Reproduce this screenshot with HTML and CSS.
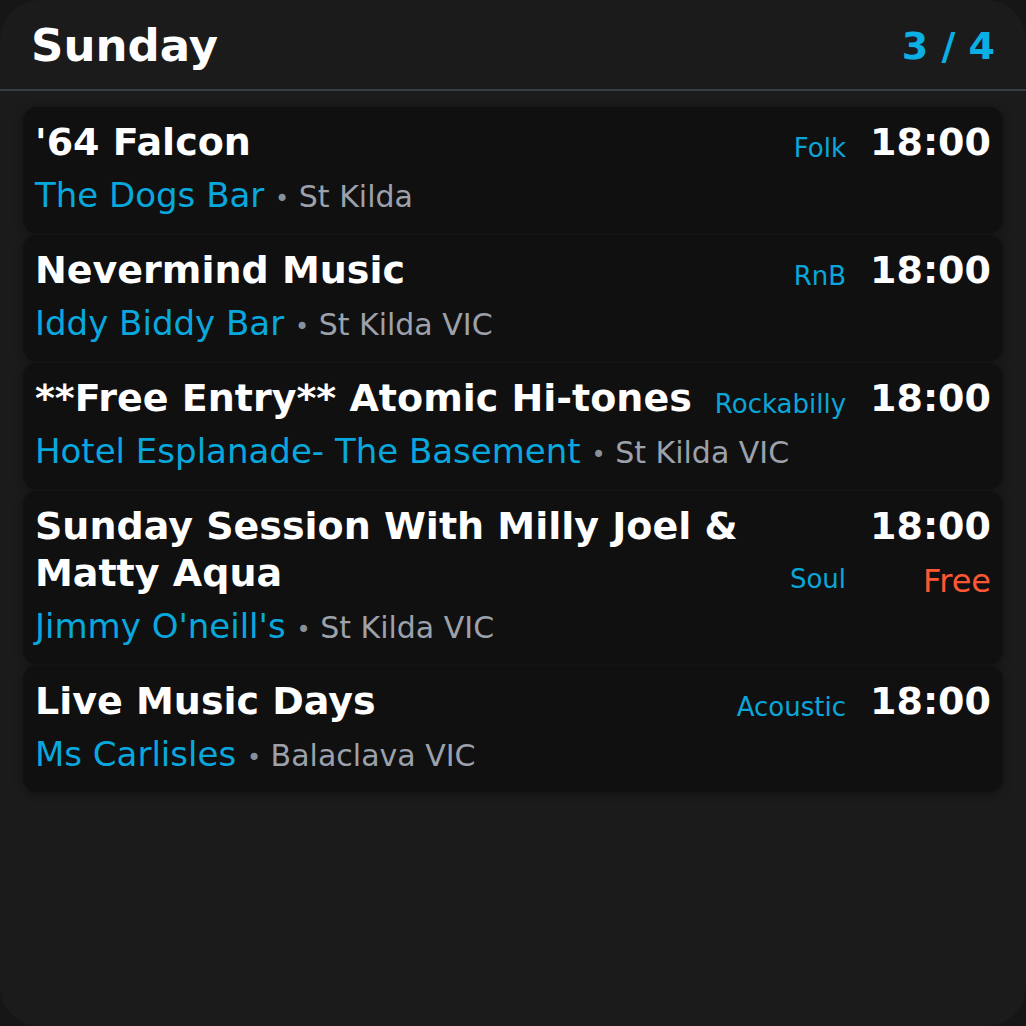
FILE: index.html
```html
<!DOCTYPE html>
<html lang="en">
<head>
<meta charset="utf-8">
<title>Sunday</title>
<link rel="stylesheet" href="styles.css">
</head>
<body>
<div class="app">
  <header class="header">
    <h1 class="day">Sunday</h1>
    <div class="count">3 / 4</div>
  </header>
  <main class="list">
    <article class="card">
      <div class="card-top">
        <h2 class="title">'64 Falcon</h2>
        <div class="meta">
          <span class="genre">Folk</span>
          <div class="when"><span class="time">18:00</span></div>
        </div>
      </div>
      <div class="venue"><span class="place">The Dogs Bar</span> <span class="sep">•</span><span class="loc"> St Kilda</span></div>
    </article>
    <article class="card">
      <div class="card-top">
        <h2 class="title">Nevermind Music</h2>
        <div class="meta">
          <span class="genre">RnB</span>
          <div class="when"><span class="time">18:00</span></div>
        </div>
      </div>
      <div class="venue"><span class="place">Iddy Biddy Bar</span> <span class="sep">•</span><span class="loc"> St Kilda VIC</span></div>
    </article>
    <article class="card">
      <div class="card-top">
        <h2 class="title">**Free Entry** Atomic Hi-tones</h2>
        <div class="meta">
          <span class="genre">Rockabilly</span>
          <div class="when"><span class="time">18:00</span></div>
        </div>
      </div>
      <div class="venue"><span class="place">Hotel Esplanade- The Basement</span> <span class="sep">•</span><span class="loc"> St Kilda VIC</span></div>
    </article>
    <article class="card">
      <div class="card-top">
        <h2 class="title">Sunday Session With Milly Joel &amp; Matty Aqua</h2>
        <div class="meta">
          <span class="genre">Soul</span>
          <div class="when"><span class="time">18:00</span><span class="price">Free</span></div>
        </div>
      </div>
      <div class="venue"><span class="place">Jimmy O'neill's</span> <span class="sep">•</span><span class="loc"> St Kilda VIC</span></div>
    </article>
    <article class="card">
      <div class="card-top">
        <h2 class="title">Live Music Days</h2>
        <div class="meta">
          <span class="genre">Acoustic</span>
          <div class="when"><span class="time">18:00</span></div>
        </div>
      </div>
      <div class="venue"><span class="place">Ms Carlisles</span> <span class="sep">•</span><span class="loc"> Balaclava VIC</span></div>
    </article>
  </main>
</div>
</body>
</html>
```
FILE: styles.css
```css
html, body {
  margin: 0;
  padding: 0;
  background: #161616;
}
body {
  font-family: "DejaVu Sans", "Liberation Sans", sans-serif;
  color: #ffffff;
}
.app {
  height: 1026px;
  background: #1b1b1b;
  border-radius: 40px;
  overflow: hidden;
}
.header {
  display: flex;
  justify-content: space-between;
  align-items: center;
  padding: 19px 31px 17px 31px;
  border-bottom: 2px solid #373c46;
}
.day {
  margin: 0;
  font-size: 45px;
  font-weight: bold;
  line-height: normal;
}
.count {
  font-size: 38px;
  font-weight: bold;
  color: #0ab0e3;
}
.list {
  display: flex;
  flex-direction: column;
  gap: 2px;
  padding: 16px 23px;
}
.card {
  background: #101010;
  border-radius: 14px;
  padding: 12px 12px 18px;
  box-shadow: 0 2px 10px rgba(0, 0, 0, 0.35);
}
.card-top {
  display: flex;
  align-items: flex-start;
  gap: 20px;
}
.title {
  flex: 1;
  margin: 0;
  font-size: 38px;
  font-weight: bold;
  line-height: 47px;
}
.meta {
  display: flex;
  align-items: flex-end;
  gap: 24px;
  flex-shrink: 0;
}
.genre {
  font-size: 26px;
  color: #0aa6da;
  margin-bottom: 3px;
}
.when {
  display: flex;
  flex-direction: column;
  align-items: flex-end;
}
.time {
  font-size: 38px;
  font-weight: bold;
  line-height: 47px;
}
.price {
  font-size: 32px;
  color: #ff5733;
  margin-top: 12px;
  margin-bottom: -3px;
}
.venue {
  margin-top: 9px;
  font-size: 34px;
  color: #9ca1ab;
}
.place {
  color: #08a8de;
}
.sep {
  font-size: 24px;
  color: #8a909a;
}
.loc {
  font-size: 30px;
}
```
